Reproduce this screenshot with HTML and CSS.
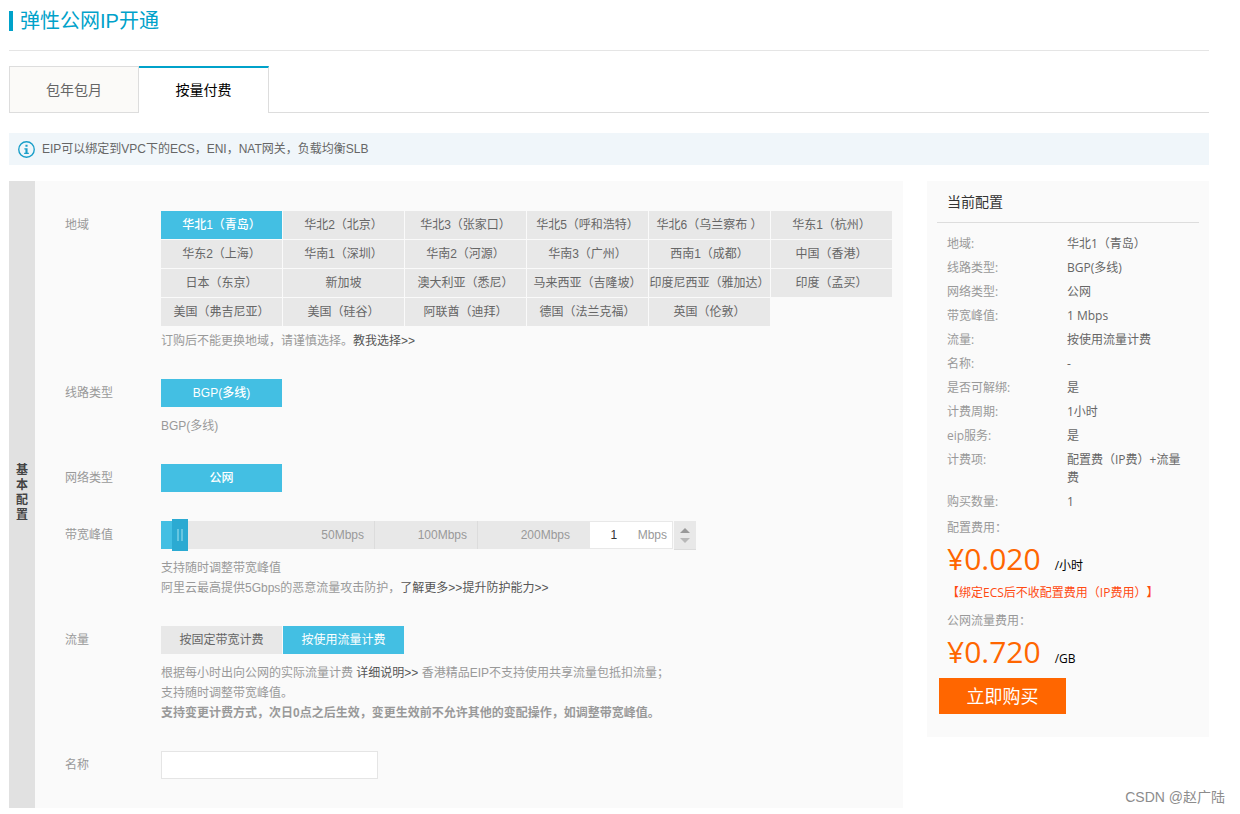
FILE: index.html
```html
<!DOCTYPE html>
<html lang="zh-CN">
<head>
<meta charset="utf-8">
<meta name="viewport" content="width=device-width, initial-scale=1">
<title>弹性公网IP开通</title>
<link rel="stylesheet" href="styles.css">
</head>
<body>
<div class="page">
  <header class="page-header">
    <h1 class="page-title">弹性公网IP开通</h1>
  </header>

  <nav class="tabs" aria-label="付费方式">
    <button type="button" class="tab">包年包月</button>
    <button type="button" class="tab tab-active" aria-current="page">按量付费</button>
  </nav>

  <div class="notice">
    <svg class="notice-icon" viewBox="0 0 16 16" aria-hidden="true">
      <circle cx="8" cy="8" r="7.3" fill="none" stroke="#1a9fc9" stroke-width="1.3"/>
      <path d="M7 3.5h2v1.8H7zM6 6.8h3v4.2h1.2v1.3H5.8V11H7V8H6z" fill="#1a9fc9"/>
    </svg>
    <p class="notice-text">EIP可以绑定到VPC下的ECS，ENI，NAT网关，负载均衡SLB</p>
  </div>

  <div class="columns">
    <main class="config">
      <h2 class="config-side"><span class="config-side-text">基本配置</span></h2>
      <form class="config-form">
        <div class="row">
          <span class="row-label" id="l-region">地域</span>
          <div class="row-body">
            <div class="options" role="group" aria-labelledby="l-region">
              <button type="button" class="option option-on option-strong">华北1（青岛）</button>
              <button type="button" class="option">华北2（北京）</button>
              <button type="button" class="option">华北3（张家口）</button>
              <button type="button" class="option">华北5（呼和浩特）</button>
              <button type="button" class="option">华北6（乌兰察布 ）</button>
              <button type="button" class="option">华东1（杭州）</button>
              <button type="button" class="option">华东2（上海）</button>
              <button type="button" class="option">华南1（深圳）</button>
              <button type="button" class="option">华南2（河源）</button>
              <button type="button" class="option">华南3（广州）</button>
              <button type="button" class="option">西南1（成都）</button>
              <button type="button" class="option">中国（香港）</button>
              <button type="button" class="option">日本（东京）</button>
              <button type="button" class="option">新加坡</button>
              <button type="button" class="option">澳大利亚（悉尼）</button>
              <button type="button" class="option">马来西亚（吉隆坡）</button>
              <button type="button" class="option">印度尼西亚（雅加达）</button>
              <button type="button" class="option">印度（孟买）</button>
              <button type="button" class="option">美国（弗吉尼亚）</button>
              <button type="button" class="option">美国（硅谷）</button>
              <button type="button" class="option">阿联酋（迪拜）</button>
              <button type="button" class="option">德国（法兰克福）</button>
              <button type="button" class="option">英国（伦敦）</button>
            </div>
            <p class="hint hint-tight">订购后不能更换地域，请谨慎选择。<a class="link" href="#">教我选择&gt;&gt;</a></p>
          </div>
        </div>

        <div class="row">
          <span class="row-label" id="l-line">线路类型</span>
          <div class="row-body">
            <div class="options" role="group" aria-labelledby="l-line">
              <button type="button" class="option option-on option-strong">BGP(多线)</button>
            </div>
            <p class="hint">BGP(多线)</p>
          </div>
        </div>

        <div class="row">
          <span class="row-label" id="l-net">网络类型</span>
          <div class="row-body">
            <div class="options" role="group" aria-labelledby="l-net">
              <button type="button" class="option option-on option-strong">公网</button>
            </div>
          </div>
        </div>

        <div class="row">
          <label class="row-label" for="bandwidth">带宽峰值</label>
          <div class="row-body">
            <div class="bandwidth">
              <div class="slider">
                <span class="tick tick-first">50Mbps</span>
                <span class="tick">100Mbps</span>
                <span class="tick tick-last">200Mbps</span>
                <input class="slider-input" id="bandwidth" type="range" min="1" max="200" value="1">
              </div>
              <div class="amount">
                <input class="amount-input" type="text" value="1" aria-label="带宽数值">
                <span class="amount-unit">Mbps</span>
              </div>
              <div class="stepper">
                <button type="button" class="step" aria-label="增加"><svg class="step-icon" viewBox="0 0 10 5"><path d="M0 5L5 0l5 5z" fill="#999"/></svg></button>
                <button type="button" class="step" aria-label="减少"><svg class="step-icon" viewBox="0 0 10 5"><path d="M0 0l5 5 5-5z" fill="#b8b8b8"/></svg></button>
              </div>
            </div>
            <p class="hint">支持随时调整带宽峰值<br>阿里云最高提供5Gbps的恶意流量攻击防护，<a class="link" href="#">了解更多&gt;&gt;</a><a class="link" href="#">提升防护能力&gt;&gt;</a></p>
          </div>
        </div>

        <div class="row">
          <span class="row-label" id="l-flow">流量</span>
          <div class="row-body">
            <div class="options" role="group" aria-labelledby="l-flow">
              <button type="button" class="option">按固定带宽计费</button>
              <button type="button" class="option option-on">按使用流量计费</button>
            </div>
            <p class="hint">根据每小时出向公网的实际流量计费 <a class="link" href="#">详细说明&gt;&gt;</a> 香港精品EIP不支持使用共享流量包抵扣流量；<br>支持随时调整带宽峰值。<br><strong>支持变更计费方式，次日0点之后生效，变更生效前不允许其他的变配操作，如调整带宽峰值。</strong></p>
          </div>
        </div>

        <div class="row">
          <label class="row-label" for="name">名称</label>
          <div class="row-body">
            <input class="name-input" id="name" type="text">
          </div>
        </div>
      </form>
    </main>

    <aside class="summary">
      <h2 class="summary-title">当前配置</h2>
      <dl class="facts">
        <dt>地域:</dt><dd>华北1（青岛）</dd>
        <dt>线路类型:</dt><dd>BGP(多线)</dd>
        <dt>网络类型:</dt><dd>公网</dd>
        <dt>带宽峰值:</dt><dd>1 Mbps</dd>
        <dt>流量:</dt><dd>按使用流量计费</dd>
        <dt>名称:</dt><dd>-</dd>
        <dt>是否可解绑:</dt><dd>是</dd>
        <dt>计费周期:</dt><dd>1小时</dd>
        <dt>eip服务:</dt><dd>是</dd>
        <dt>计费项:</dt><dd>配置费（IP费）+流量费</dd>
        <dt>购买数量:</dt><dd>1</dd>
      </dl>
      <div class="fees">
        <p class="fee-label">配置费用：</p>
        <p class="fee"><span class="fee-price">¥0.020</span><span class="fee-unit">/小时</span></p>
        <p class="fee-note">【绑定ECS后不收配置费用（IP费用）】</p>
        <p class="fee-label">公网流量费用：</p>
        <p class="fee"><span class="fee-price">¥0.720</span><span class="fee-unit">/GB</span></p>
      </div>
      <button type="button" class="buy">立即购买</button>
    </aside>
  </div>
</div>
<div class="watermark">CSDN @赵广陆</div>
</body>
</html>
```
FILE: styles.css
```css
* {
  box-sizing: border-box;
}

body {
  margin: 0;
  position: relative;
  background: #fff;
  color: #666;
  font: 12px/20px "Liberation Sans", "Noto Sans CJK SC", sans-serif;
  text-spacing-trim: space-all;
}

h1, h2, p, dl, dd {
  margin: 0;
  font-weight: normal;
}

button, input {
  font: inherit;
  color: inherit;
  margin: 0;
  padding: 0;
  border: 0;
  border-radius: 0;
}

.page {
  padding: 11px 31px 6px 9px;
}

/* Header */
.page-header {
  padding-bottom: 19px;
  border-bottom: 1px solid #e5e5e5;
}

.page-title {
  padding: 1px 0 0 7px;
  border-left: 4px solid #00a2ca;
  color: #00a2ca;
  font-size: 20px;
  line-height: 19px;
}

/* Tabs */
.tabs {
  display: flex;
  margin-top: 15px;
  box-shadow: inset 0 -1px #ddd;
}

.tab {
  width: 130px;
  height: 47px;
  background: #fbfaf8;
  border: 1px solid #ddd;
  font-size: 14px;
}

.tab-active {
  padding-bottom: 2px;
  background: #fff;
  border-top: 2px solid #00a2ca;
  border-left: 0;
  border-bottom: 0;
  color: #000;
}

/* Notice */
.notice {
  display: flex;
  align-items: center;
  gap: 7px;
  margin-top: 20px;
  padding: 6px 9px;
  background: #f0f6fa;
}

.notice-icon {
  width: 17px;
  height: 17px;
}

/* Columns */
.columns {
  display: flex;
  align-items: flex-start;
  gap: 24px;
  margin-top: 16px;
}

.config {
  display: flex;
  flex: 1;
  background: #fafafa;
}

.config-side {
  display: flex;
  align-items: center;
  justify-content: center;
  width: 26px;
  padding-bottom: 4px;
  background: #e1e1e1;
  color: #444;
  font-size: 12px;
  font-weight: bold;
  line-height: 15px;
}

.config-side-text {
  width: 12px;
}

.config-form {
  display: flex;
  flex: 1;
  flex-direction: column;
  gap: 28px;
  padding: 30px 11px 28px 30px;
}

.row {
  display: flex;
  min-height: 29px;
}

.row-label {
  width: 96px;
  color: #999;
  line-height: 28px;
}

.row-body {
  flex: 1;
}

.options {
  display: grid;
  grid-template-columns: repeat(auto-fill, 121px);
  gap: 1px;
}

.option {
  height: 28px;
  background: #e8e8e8;
  white-space: nowrap;
}

.option-on {
  background: #43bfe3;
  color: #fff;
}

.option-strong {
  font-weight: 500;
}

.hint {
  margin-top: 9px;
  color: #999;
}

.hint-tight {
  margin-top: 5px;
}

.link {
  color: #555;
  text-decoration: none;
}

/* Bandwidth */
.bandwidth {
  display: flex;
  height: 28px;
}

.slider {
  position: relative;
  display: flex;
  height: 28px;
  background: linear-gradient(#43bfe3, #43bfe3) 0 0 / 11px 100% no-repeat #e8e8e8;
  color: #999;
  line-height: 28px;
  text-align: right;
}

.tick {
  width: 103px;
  padding-right: 10px;
  border-right: 1px solid #dcdcdc;
}

.tick-first {
  width: 214px;
}

.tick-last {
  width: 112px;
  padding-right: 20px;
  border-right: 0;
}

.slider-input {
  position: absolute;
  top: -2px;
  right: 0;
  left: 11px;
  height: 32px;
  background: transparent;
  appearance: none;
}

.slider-input::-webkit-slider-thumb {
  width: 16px;
  height: 32px;
  border: 0;
  border-radius: 0;
  background:
    linear-gradient(#65c6e1, #65c6e1) 5px 10px / 2px 12px no-repeat,
    linear-gradient(#65c6e1, #65c6e1) 9px 10px / 2px 12px no-repeat,
    #2baad2;
  appearance: none;
}

.amount {
  display: flex;
  align-items: center;
  width: 83px;
  height: 28px;
  padding-right: 5px;
  background: #fff;
  border: 1px solid #e8e8e8;
  border-left: 0;
}

.amount-input {
  flex: 1;
  min-width: 0;
  width: 47px;
  height: 26px;
  color: #333;
  text-align: center;
  background: transparent;
}

.amount-unit {
  color: #999;
}

.stepper {
  display: flex;
  flex-direction: column;
  justify-content: center;
  gap: 5px;
  width: 22px;
  height: 29px;
  margin-left: 1px;
  background: #e8e8e8;
  border-bottom: 1px solid #dcdcdc;
}

.step {
  display: flex;
  justify-content: center;
  background: transparent;
}

.step-icon {
  width: 10px;
  height: 5px;
}

.name-input {
  display: block;
  width: 217px;
  height: 28px;
  padding: 0 8px;
  background: #fff;
  border: 1px solid #e5e5e5;
}

/* Summary */
.summary {
  width: 282px;
  padding: 0 10px 23px;
  background: #fafafa;
  font-family: "Open Sans", "Noto Sans CJK SC", sans-serif;
}

.summary-title {
  padding: 0 10px;
  border-bottom: 1px solid #ddd;
  color: #333;
  font-size: 14px;
  line-height: 41px;
}

.facts {
  display: grid;
  grid-template-columns: 120px 1fr;
  padding: 9px 10px 0;
  line-height: 18px;
}

.facts dt,
.facts dd {
  padding: 3px 0;
}

.facts dt {
  color: #999;
}

.fees {
  padding: 0 10px;
  line-height: 28px;
}

.fee-label {
  color: #999;
}

.fee {
  display: flex;
  align-items: baseline;
  gap: 14px;
  height: 37px;
  line-height: 34px;
}

.fee-price {
  color: #f60;
  font-size: 30px;
}

.fee-unit {
  color: #000;
}

.fee-note {
  color: #ff4a12;
}

.buy {
  display: block;
  width: 127px;
  height: 36px;
  margin: 6px 0 0 2px;
  background: #f60;
  color: #fff;
  font-size: 18px;
}

.watermark {
  position: absolute;
  right: 15px;
  bottom: 7px;
  color: #8c8c8c;
  font-size: 14px;
}
```
